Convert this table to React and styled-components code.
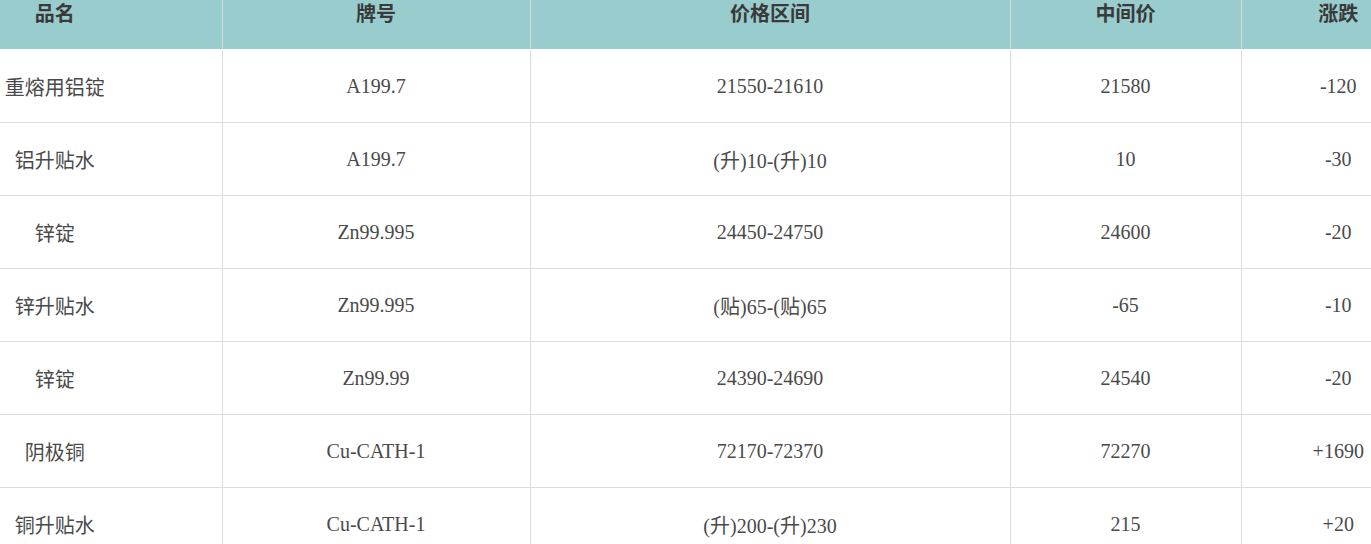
import React from 'react';
import styled, { createGlobalStyle } from 'styled-components';

const Global = createGlobalStyle`
  html, body {
    margin: 0;
    padding: 0;
    background: #fff;
    overflow: hidden;
  }
`;

const rows = [
  ['重熔用铝锭', 'A199.7', '21550-21610', '21580', '-120'],
  ['铝升贴水', 'A199.7', '(升)10-(升)10', '10', '-30'],
  ['锌锭', 'Zn99.995', '24450-24750', '24600', '-20'],
  ['锌升贴水', 'Zn99.995', '(贴)65-(贴)65', '-65', '-10'],
  ['锌锭', 'Zn99.99', '24390-24690', '24540', '-20'],
  ['阴极铜', 'Cu-CATH-1', '72170-72370', '72270', '+1690'],
  ['铜升贴水', 'Cu-CATH-1', '(升)200-(升)230', '215', '+20'],
];

const heads = ['品名', '牌号', '价格区间', '中间价', '涨跌'];
const widths = [222, 308, 480, 231, 194];

const Price = () => {
  return (
    <>
      <Global />
      <Table>
        <colgroup>
          {widths.map((w, i) => <col key={i} style={{ width: w }} />)}
        </colgroup>
        <thead>
          <tr>
            {heads.map((h, i) => <Th key={h} first={i === 0}>{h}</Th>)}
          </tr>
        </thead>
        <tbody>
          {rows.map((r, ri) => (
            <Tr key={ri}>
              {r.map((c, ci) => <Td key={ci} first={ci === 0}>{c}</Td>)}
            </Tr>
          ))}
        </tbody>
      </Table>
    </>
  );
};

export default Price;

const Table = styled.table`
  width: 1435px;
  table-layout: fixed;
  border-collapse: collapse;
  font-family: "Liberation Serif", "Noto Sans CJK SC", serif;
  font-size: 20px;
`;

const Th = styled.th`
  height: 49px;
  padding: 0 ${(props) => (props.first ? '112px' : '0')} 0 0;
  box-sizing: border-box;
  vertical-align: top;
  line-height: 28px;
  background: #99cccc;
  color: #3a3a3a;
  font-weight: bold;
  text-align: center;
  border-left: 1px solid #dcdcdc;
  &:first-child { border-left: none; }
`;

const Tr = styled.tr`
  height: 73px;
  border-top: 1px solid #dddddd;
  &:first-child { border-top: none; }
`;

const Td = styled.td`
  padding: 2px ${(props) => (props.first ? '112px' : '0')} 0 0;
  color: #4a4a4a;
  text-align: center;
  vertical-align: middle;
  white-space: nowrap;
  border-left: 1px solid #dddddd;
  &:first-child { border-left: none; }
`;
